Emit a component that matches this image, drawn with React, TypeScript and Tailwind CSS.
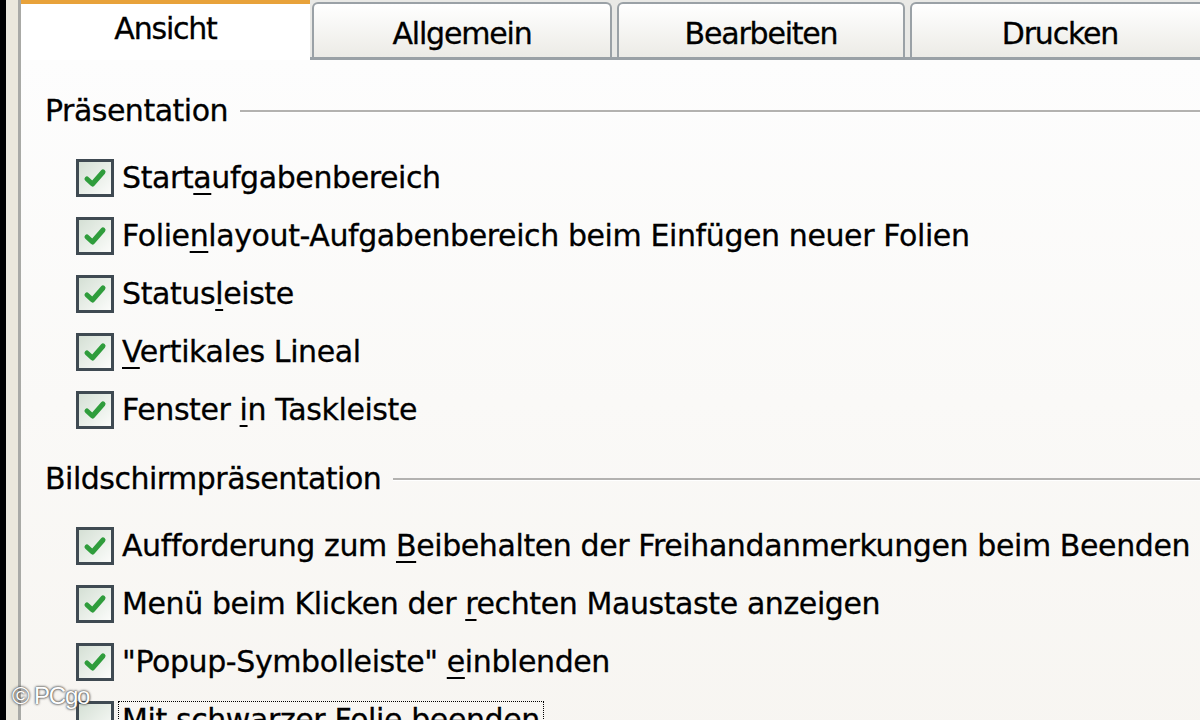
import React from "react";

const font = { fontFamily: '"DejaVu Sans", Tahoma, sans-serif' };

function Check({ checked = true }: { checked?: boolean }) {
  return (
    <div className="w-[38px] h-[38px] shrink-0 border-[3px] border-[#3f4a52] bg-gradient-to-br from-[#d5e0d5] to-[#fbfcfa] flex items-center justify-center">
      {checked && (
        <svg width="26" height="24" viewBox="0 0 26 24">
          <path d="M5 13 L10.5 18 L21 6" fill="none" stroke="#2f9d3c" strokeWidth="5" strokeLinecap="round" strokeLinejoin="round" />
        </svg>
      )}
    </div>
  );
}

function Row({ children, checked = true, focus = false }: { children: React.ReactNode; checked?: boolean; focus?: boolean }) {
  return (
    <div className="h-[58px] flex items-center pl-[55px] shrink-0">
      <Check checked={checked} />
      <div className={"ml-[4px] text-[30px] leading-[36px] text-black tracking-[-0.4px] whitespace-nowrap px-[3px] [-webkit-text-stroke:0.3px_black] " + (focus ? "border border-dotted border-black" : "border border-transparent")}>
        {children}
      </div>
    </div>
  );
}

function Header({ title }: { title: string }) {
  return (
    <div className="h-[50px] flex items-center pl-[24px] shrink-0">
      <span className="text-[30px] leading-[36px] text-black tracking-[-0.5px] whitespace-nowrap [-webkit-text-stroke:0.3px_black]">{title}</span>
      <div className="flex-1 ml-[12px] h-[3px] bg-[#b3b2b0] border-b border-white" />
    </div>
  );
}

const U = ({ c }: { c: string }) => <span className="underline underline-offset-[5px] decoration-[2px]">{c}</span>;

function Tab({ label, w }: { label: string; w: string }) {
  return (
    <div className={"h-[55px] mt-[5px] border-[2px] border-b-0 border-[#9aa1a6] rounded-t-[6px] bg-gradient-to-b from-white to-[#ecebe6] flex items-center justify-center text-[30px] tracking-[-1.2px] text-black shrink-0 [-webkit-text-stroke:0.3px_black] " + w}>
      <span className="mt-[6px]">{label}</span>
    </div>
  );
}

export default function App() {
  return (
    <div className="w-[1200px] h-[720px] overflow-hidden flex bg-black relative" style={font}>
      <div className="w-[6px] bg-black shrink-0" />
      <div className="w-[12px] bg-[#ebe8dc] shrink-0" />
      <div className="w-[3px] bg-[#a9aaa6] shrink-0" />
      <div className="flex-1 flex flex-col bg-[#e9e9e6]">
        <div className="h-[60px] flex items-end shrink-0">
          <div className="w-[289px] h-[60px] bg-white border-t-[4px] border-[#e8a23a] flex items-start justify-center text-[30px] tracking-[-1.2px] text-black shrink-0 relative [-webkit-text-stroke:0.3px_black]">
            <span className="mt-[2px]">Ansicht</span>
          </div>
          <div className="flex-1 h-[60px] flex items-end border-b-[3px] border-[#9aa1a6] gap-[5px] pl-[2px]">
            <Tab label="Allgemein" w="w-[300px]" />
            <Tab label="Bearbeiten" w="w-[288px]" />
            <Tab label="Drucken" w="w-[300px]" />
          </div>
        </div>
        <div className="flex-1 flex flex-col bg-gradient-to-b from-[#fdfdfd] to-[#f7f5f1] pt-[26px]">
          <Header title="Präsentation" />
          <div className="h-[13px] shrink-0" />
          <Row>Start<U c="a" />ufgabenbereich</Row>
          <Row>Folie<U c="n" />layout-Aufgabenbereich beim Einfügen neuer Folien</Row>
          <Row>Status<U c="l" />eiste</Row>
          <Row><U c="V" />ertikales Lineal</Row>
          <Row>Fenster <U c="i" />n Taskleiste</Row>
          <div className="h-[15px] shrink-0" />
          <Header title="Bildschirmpräsentation" />
          <div className="h-[13px] shrink-0" />
          <Row>Aufforderung zum <U c="B" />eibehalten der Freihandanmerkungen beim Beenden</Row>
          <Row>Menü beim Klicken der <U c="r" />echten Maustaste anzeigen</Row>
          <Row>"Popup-Symbolleiste" <U c="e" />inblenden</Row>
          <Row checked={false} focus>Mit schwarzer Folie beenden</Row>
        </div>
      </div>
      <div
        className="absolute left-[12px] top-[681px] text-[24px] leading-[30px] text-white tracking-[-1.2px] [text-shadow:0_0_2px_#333,0_0_3px_#555]"
        style={{ fontFamily: '"Liberation Sans", Arial, sans-serif' }}
      >
        © PCgo
      </div>
    </div>
  );
}
